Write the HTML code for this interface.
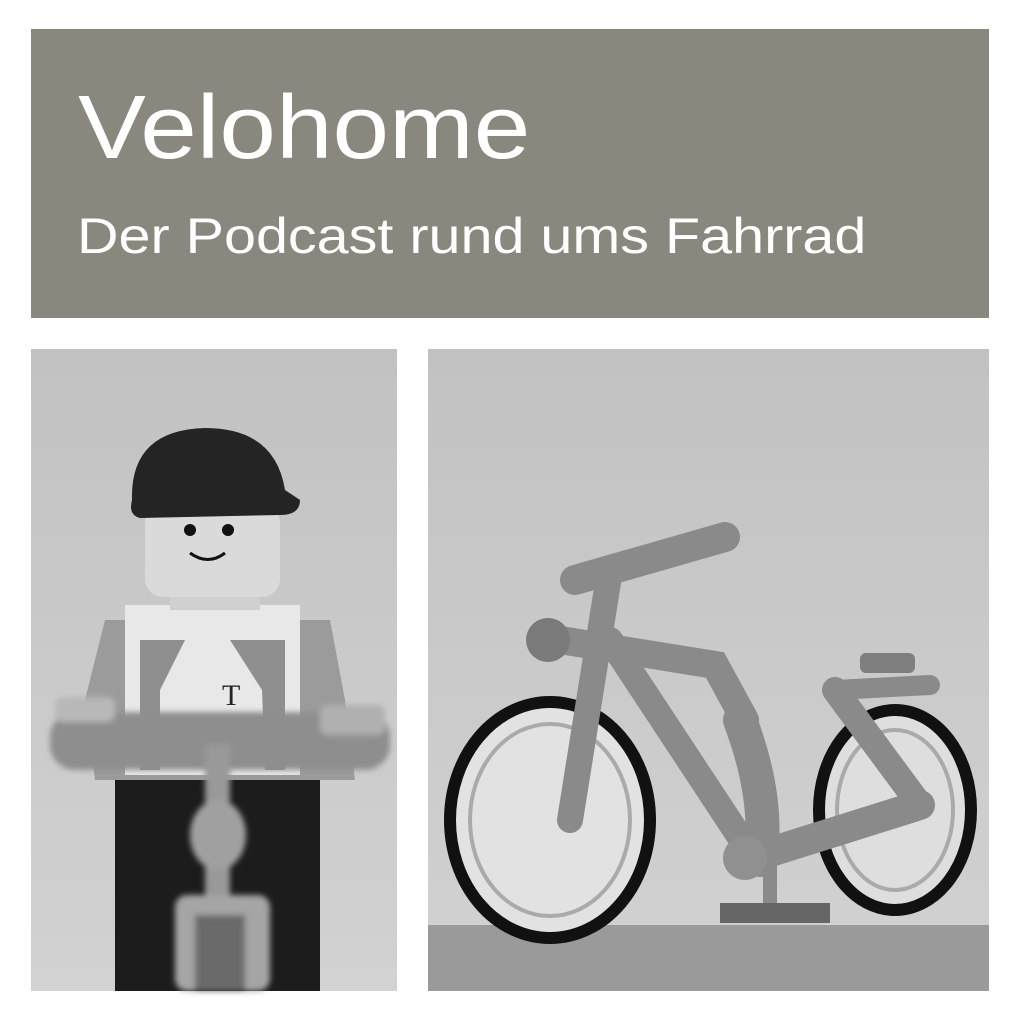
<!DOCTYPE html>
<html><head><meta charset="utf-8"><style>
html,body{margin:0;padding:0;background:#fff;width:1024px;height:1024px;overflow:hidden}
.ban{position:absolute;left:31px;top:29px;width:958px;height:289px;background:#8a877e}
.t1{position:absolute;left:78px;top:83px;font:90px/1 "Liberation Sans",sans-serif;color:#fff;transform:scaleX(1.13);transform-origin:0 0;white-space:nowrap}
.t2{position:absolute;left:77px;top:211px;font:50px/1 "Liberation Sans",sans-serif;color:#fff;transform:scaleX(1.15);transform-origin:0 0;white-space:nowrap}
svg{position:absolute;left:0;top:0}
</style></head><body>
<div class="ban"></div>
<svg width="1024" height="1024" viewBox="0 0 1024 1024">
<defs>
<linearGradient id="bg1" x1="0" y1="0" x2="0" y2="1"><stop offset="0" stop-color="#c2c2c2"/><stop offset="1" stop-color="#d2d2d2"/></linearGradient>
<filter id="bl"><feGaussianBlur stdDeviation="3"/></filter>
</defs>
<rect x="31" y="349" width="366" height="642" fill="url(#bg1)"/>
<rect x="428" y="349" width="561" height="642" fill="url(#bg1)"/>
<rect x="428" y="925" width="561" height="66" fill="#9a9a9a"/>
<rect x="115" y="770" width="205" height="221" fill="#1c1c1c"/>
<path d="M105 620 L330 620 L345 700 L355 780 L95 780 L85 700Z" fill="#9b9b9b"/>
<rect x="125" y="605" width="175" height="170" fill="#e8e8e8"/>
<path d="M140 640 L285 640 L285 770 L265 770 L262 690 L230 640 L185 640 L160 690 L160 770 L140 770Z" fill="#8f8f8f"/>
<text x="222" y="705" font-family="Liberation Serif,serif" font-size="30" fill="#222">T</text>
<rect x="170" y="595" width="90" height="15" fill="#d0d0d0"/>
<rect x="145" y="505" width="135" height="92" rx="18" fill="#dadada"/>
<circle cx="190" cy="530" r="6" fill="#111"/><circle cx="228" cy="530" r="6" fill="#111"/>
<path d="M190 553 Q208 566 225 553" stroke="#111" stroke-width="3" fill="none"/>
<path d="M132 500 Q130 430 205 428 Q275 428 285 490 L300 500 Q300 515 280 515 L140 518 Q128 515 132 500Z" fill="#242424"/>
<g filter="url(#bl)">
<rect x="50" y="712" width="340" height="58" rx="25" fill="#8e8e8e"/>
<rect x="55" y="697" width="60" height="25" rx="8" fill="#b8b8b8"/>
<rect x="320" y="705" width="65" height="30" rx="8" fill="#b0b0b0"/>
<rect x="205" y="745" width="25" height="246" fill="#999"/>
<ellipse cx="218" cy="835" rx="28" ry="35" fill="#a0a0a0"/>
<rect x="175" y="895" width="95" height="96" rx="12" fill="#a5a5a5"/>
<rect x="195" y="915" width="50" height="76" fill="#6a6a6a"/>
</g>
<ellipse cx="550" cy="820" rx="100" ry="118" fill="#e2e2e2" stroke="#111" stroke-width="12"/>
<ellipse cx="550" cy="820" rx="80" ry="96" fill="none" stroke="#aaa" stroke-width="4"/>
<ellipse cx="895" cy="810" rx="76" ry="100" fill="#dedede" stroke="#111" stroke-width="12"/>
<ellipse cx="895" cy="810" rx="58" ry="80" fill="none" stroke="#aaa" stroke-width="4"/>
<g stroke="#8a8a8a" stroke-linecap="round" fill="none">
<path d="M575 580 L725 537" stroke-width="30"/>
<path d="M610 570 L570 820" stroke-width="26"/>
<path d="M560 640 L715 665 L745 720" stroke-width="28"/>
<path d="M610 640 L755 860" stroke-width="26"/>
<path d="M745 860 L920 805" stroke-width="30"/>
<path d="M835 690 L920 805" stroke-width="26"/>
<path d="M740 720 Q770 800 760 860" stroke-width="34"/>
<path d="M835 690 L930 685" stroke-width="20"/>
<path d="M770 860 L770 905" stroke-width="14"/>
</g>
<rect x="720" y="903" width="110" height="20" fill="#666"/>
<circle cx="548" cy="640" r="22" fill="#7a7a7a"/>
<rect x="860" y="653" width="55" height="20" rx="6" fill="#7f7f7f"/>
<circle cx="745" cy="858" r="22" fill="#909090"/>
</svg>
<div class="t1">Velohome</div>
<div class="t2">Der Podcast rund ums Fahrrad</div>
</body></html>
